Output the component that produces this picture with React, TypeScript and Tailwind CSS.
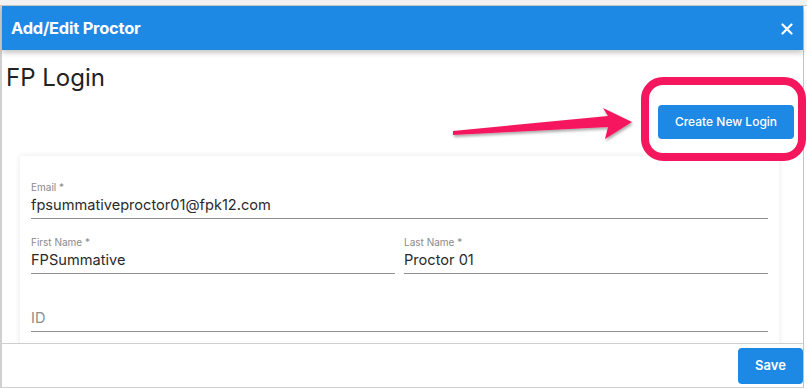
import React from "react";

function Field({ label, value, placeholder }: { label?: string; value?: string; placeholder?: string }) {
  return (
    <div className="flex flex-col">
      <div className="h-[14px] text-[10px] leading-[14px] text-[#8a8a8a]">{label ?? ""}</div>
      <div
        className={
          "h-[22px] text-[14.6px] leading-[22px] " + (placeholder ? "text-[#8d8d8d]" : "text-[#2a2a2a]")
        }
      >
        {value ?? placeholder}
      </div>
      <div className="mt-[2px] h-px bg-[#8f8f8f]" />
    </div>
  );
}

export default function App() {
  return (
    <div
      className="relative w-[807px] h-[389px] overflow-hidden bg-white"
      style={{ fontFamily: "Inter, 'Open Sans', Arial, sans-serif" }}
    >
      <div className="h-[6px] bg-[#f2f2f2] border-b border-[#c9c9c9]" />
      <div className="flex h-[382px] flex-col border-l-2 border-[#d0d0d0] mr-[3px] border-r border-r-[#c4c4c4]">
        <div className="relative z-10 flex h-[44px] shrink-0 items-center justify-between bg-[#1e88e5] pl-[9px] pr-[10px] shadow-[0_3px_5px_rgba(0,0,0,0.22)]">
          <span className="text-[16.4px] font-bold tracking-[-0.2px] text-white">Add/Edit Proctor</span>
          <svg width="12" height="12" viewBox="0 0 12 12" className="mt-[2px]">
            <path d="M1.5 1.5 L10.5 10.5 M10.5 1.5 L1.5 10.5" stroke="white" strokeWidth="2.2" strokeLinecap="round" />
          </svg>
        </div>
        <div className="relative flex-1 overflow-hidden">
          <div className="pl-[4px] pt-[12px] text-[24px] leading-[32px] text-[#222]">FP Login</div>
          <div className="flex justify-end pr-[9px] pt-[11px]">
            <button className="h-[34px] w-[136px] rounded-[4px] bg-[#1e88e5] text-[12px] font-medium text-white">
              Create New Login
            </button>
          </div>
          <div className="ml-[18px] mr-[24px] mt-[17px] rounded-[3px] bg-white px-[11px] pt-[24px] shadow-[0_0_6px_rgba(0,0,0,0.09)]">
            <Field label="Email *" value="fpsummativeproctor01@fpk12.com" />
            <div className="mt-[16px] grid grid-cols-2 gap-[9px]">
              <Field label="First Name *" value="FPSummative" />
              <Field label="Last Name *" value="Proctor 01" />
            </div>
            <div className="mt-[19px]">
              <Field placeholder="ID" />
            </div>
            <div className="h-[20px]" />
          </div>
        </div>
        <div className="flex h-[45px] shrink-0 items-start justify-end border-t border-[#cfcfcf] pt-[4px] border-b">
          <button className="h-[36px] w-[65px] rounded-[4px] bg-[#1e88e5] text-[13px] font-semibold text-white">
            Save
          </button>
        </div>
      </div>

      <div className="absolute left-[641px] top-[77px] h-[84px] w-[165px] rounded-[22px] border-[8px] border-[#f5175e]" />
      <svg className="absolute left-0 top-0" width="807" height="389" style={{ pointerEvents: "none" }}>
        <defs>
          <filter id="sh" x="-10%" y="-50%" width="120%" height="200%">
            <feDropShadow dx="1" dy="2" stdDeviation="1.5" floodColor="#000" floodOpacity="0.35" />
          </filter>
        </defs>
        <polygon
          points="453,131 608,116 603,108 632,122 605,139 608,127 453,135"
          fill="#f5175e"
          filter="url(#sh)"
        />
      </svg>
    </div>
  );
}
